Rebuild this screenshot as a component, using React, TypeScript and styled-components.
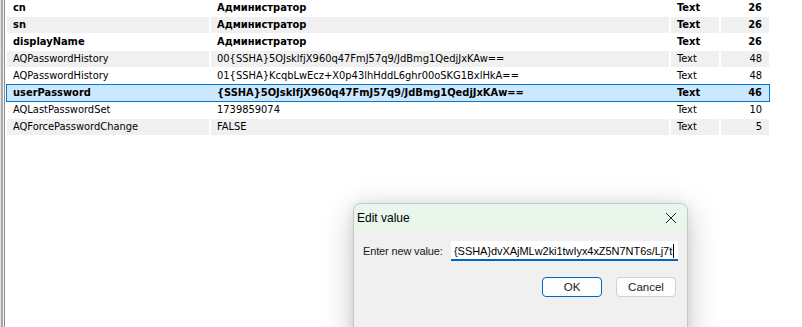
import React from "react";
import styled, { createGlobalStyle } from "styled-components";

const Global = createGlobalStyle`
  html, body { margin: 0; padding: 0; background: #fff; }
  body { width: 802px; height: 327px; overflow: hidden; }
`;

const Page = styled.div`
  position: relative;
  display: flex;
  width: 802px;
  height: 327px;
  background: #fff;
  font-family: "DejaVu Sans", "Liberation Sans", sans-serif;
  font-stretch: condensed;
  font-size: 11px;
  color: #000;
`;

const Edge = styled.div`
  width: 5px;
  flex: none;
  display: flex;
`;
const EdgeLine = styled.div<{ $c: string; $w: number }>`
  width: ${(p) => p.$w}px;
  background: ${(p) => p.$c};
`;

const Table = styled.div`
  display: flex;
  flex-direction: column;
  gap: 1px;
  padding-left: 2px;
`;

const Row = styled.div<{ $alt: boolean; $sel: boolean; $bold: boolean }>`
  display: grid;
  grid-template-columns: 202px 458px 48px 48px;
  column-gap: 2px;
  height: 16px;
  width: 762px;
  box-sizing: border-box;
  font-weight: ${(p) => (p.$bold ? 700 : 400)};
  ${(p) => (p.$sel ? `background: #cce8ff; outline: 1px solid #0078d7;` : "")}
  & > div {
    background: ${(p) => (p.$sel ? "#cce8ff" : p.$alt ? "#f0f0f0" : "#fff")};
  }
`;

const Cell = styled.div<{ $right?: boolean }>`
  display: flex;
  align-items: center;
  justify-content: ${(p) => (p.$right ? "flex-end" : "flex-start")};
  padding: 0 ${(p) => (p.$right ? "7px" : "0")} 0 ${(p) => (p.$right ? "0" : "6px")};
  white-space: nowrap;
  overflow: hidden;
  line-height: 16px;
`;

const Dialog = styled.div`
  position: absolute;
  left: 353px;
  top: 203px;
  width: 335px;
  height: 140px;
  border: 1px solid #c6c6c6;
  border-radius: 8px;
  background: #f0f0f0;
  box-shadow: 0 8px 32px rgba(0, 0, 0, 0.22), 0 0 10px rgba(0, 0, 0, 0.08);
  overflow: hidden;
  box-sizing: border-box;
  display: flex;
  flex-direction: column;
  font-family: "Liberation Sans", Arial, sans-serif;
  font-stretch: normal;
  font-size: 11px;
  color: #1a1a1a;
`;

const TitleBar = styled.div`
  height: 27px;
  background: #e9f6eb;
  display: flex;
  align-items: center;
  justify-content: space-between;
  padding: 0 9px 0 3px;
  flex: none;
`;

const Title = styled.span`
  font-size: 12px;
  color: #000;
`;

const CloseBtn = styled.div`
  width: 14px;
  height: 14px;
  display: flex;
  align-items: center;
  justify-content: center;
`;

const Body = styled.div`
  display: flex;
  flex-direction: column;
  padding: 10px 9px 0 9px;
`;

const FieldRow = styled.div`
  display: flex;
  align-items: center;
  gap: 10px;
`;

const Label = styled.span`
  width: 78px;
  flex: none;
  white-space: nowrap;
  letter-spacing: -0.15px;
`;

const Input = styled.div`
  flex: 1;
  height: 20px;
  box-sizing: border-box;
  background: #fff;
  border-bottom: 2px solid #0067c0;
  display: flex;
  align-items: center;
  padding: 1px 0 0 3px;
  white-space: nowrap;
  overflow: hidden;
  letter-spacing: -0.05px;
  color: #000;
`;

const Caret = styled.span`
  display: inline-block;
  width: 1px;
  height: 14px;
  background: #000;
  margin-left: 1px;
`;

const Buttons = styled.div`
  display: flex;
  justify-content: flex-end;
  gap: 14px;
  margin-top: 16px;
  padding-right: 2px;
`;

const Button = styled.div<{ $primary?: boolean }>`
  width: 60px;
  height: 20px;
  box-sizing: border-box;
  border-radius: 4px;
  background: #fdfdfd;
  border: 1px solid ${(p) => (p.$primary ? "#0067c0" : "#d0d0d0")};
  display: flex;
  align-items: center;
  justify-content: center;
  font-size: 11.5px;
  color: #1a1a1a;
`;

type R = { name: string; value: string; type: string; len: number; bold?: boolean; sel?: boolean };

const rows: R[] = [
  { name: "cn", value: "Администратор", type: "Text", len: 26, bold: true },
  { name: "sn", value: "Администратор", type: "Text", len: 26, bold: true },
  { name: "displayName", value: "Администратор", type: "Text", len: 26, bold: true },
  { name: "AQPasswordHistory", value: "00{SSHA}5OJsklfjX960q47FmJ57q9/JdBmg1QedjJxKAw==", type: "Text", len: 48 },
  { name: "AQPasswordHistory", value: "01{SSHA}KcqbLwEcz+X0p43lhHddL6ghr00oSKG1BxlHkA==", type: "Text", len: 48 },
  { name: "userPassword", value: "{SSHA}5OJsklfjX960q47FmJ57q9/JdBmg1QedjJxKAw==", type: "Text", len: 46, bold: true, sel: true },
  { name: "AQLastPasswordSet", value: "1739859074", type: "Text", len: 10 },
  { name: "AQForcePasswordChange", value: "FALSE", type: "Text", len: 5 },
];

export default function App() {
  return (
    <Page>
      <Global />
      <Edge>
        <EdgeLine $c="#e4e4e4" $w={1} />
        <EdgeLine $c="#a9a9a9" $w={2} />
        <EdgeLine $c="#f4f4f4" $w={1} />
        <EdgeLine $c="#8d8d8d" $w={1} />
      </Edge>
      <Table>
        {rows.map((r, i) => (
          <Row key={i} $alt={i % 2 === 1} $sel={!!r.sel} $bold={!!r.bold}>
            <Cell>{r.name}</Cell>
            <Cell>{r.value}</Cell>
            <Cell>{r.type}</Cell>
            <Cell $right>{r.len}</Cell>
          </Row>
        ))}
      </Table>
      <Dialog>
        <TitleBar>
          <Title>Edit value</Title>
          <CloseBtn>
            <svg width="12" height="12" viewBox="0 0 12 12">
              <path d="M1 1 L11 11 M11 1 L1 11" stroke="#222" strokeWidth="1" fill="none" />
            </svg>
          </CloseBtn>
        </TitleBar>
        <Body>
          <FieldRow>
            <Label>Enter new value:</Label>
            <Input>
              {"{SSHA}dvXAjMLw2ki1twIyx4xZ5N7NT6s/Lj7t"}
              <Caret />
            </Input>
          </FieldRow>
          <Buttons>
            <Button $primary>OK</Button>
            <Button>Cancel</Button>
          </Buttons>
        </Body>
      </Dialog>
    </Page>
  );
}
